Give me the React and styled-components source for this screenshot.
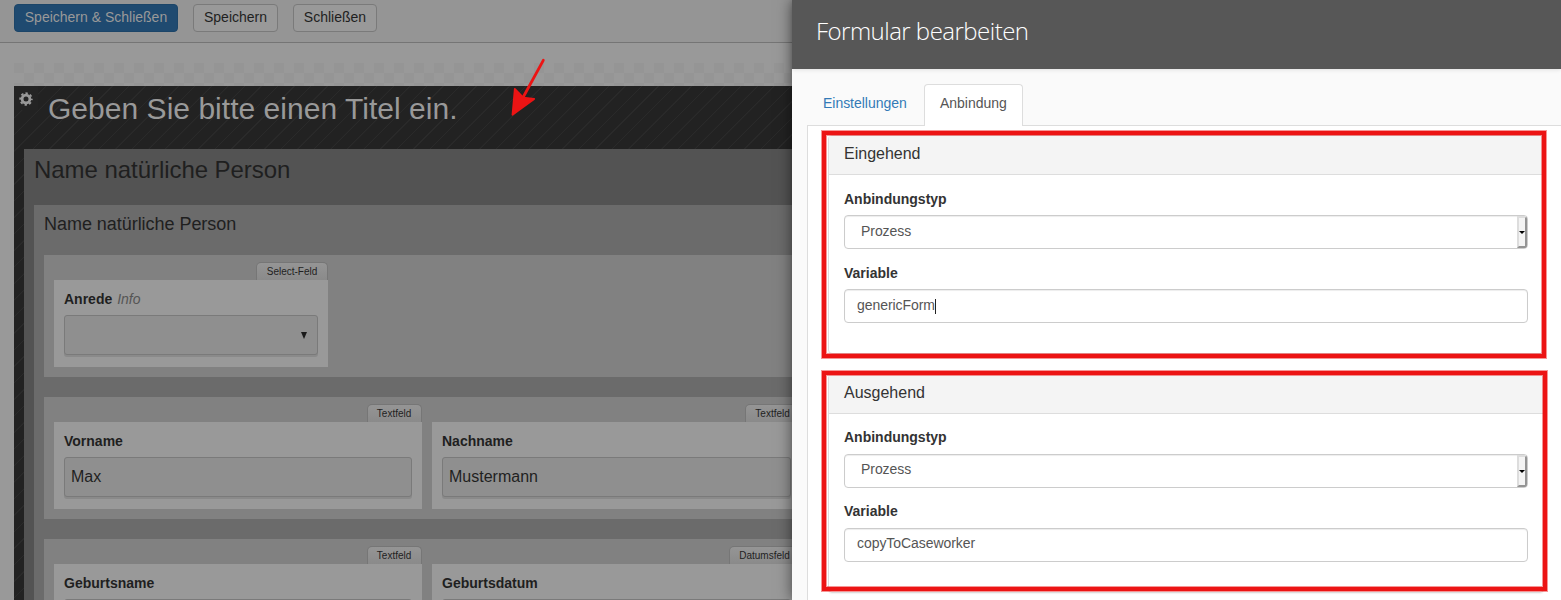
import React from 'react';
import styled, { createGlobalStyle } from 'styled-components';

const Global = createGlobalStyle`
  *, *::before, *::after { box-sizing: border-box; }
  html, body { margin: 0; height: 600px; overflow: hidden; }
  body { background: #999; color: #1f1f1f; font: 14px/20px "Liberation Sans", Arial, sans-serif; }
`;

const Screen = styled.div`
  display: flex;
  width: 1561px;
  height: 600px;
  overflow: hidden;
`;

/* dimmed editor */
const Editor = styled.main`
  flex: none;
  width: 792px;
  overflow: hidden;
`;
const Toolbar = styled.header`
  display: flex;
  align-items: flex-start;
  gap: 15px;
  height: 43px;
  padding: 4px 14px 0;
  background: #959595;
  border-bottom: 1px solid #757575;
`;
const Button = styled.button`
  width: ${p => p.$w}px;
  height: 28px;
  padding: 0 0 2px;
  border: 1px solid ${p => (p.$primary ? '#1c4568' : '#7a7a7a')};
  border-radius: 4px;
  background: ${p => (p.$primary ? '#1f4a70' : '#999')};
  color: ${p => (p.$primary ? '#999' : '#1f1f1f')};
  font: inherit;
  white-space: nowrap;
`;
const Canvas = styled.div`
  width: 1216px;
  margin: 20px 0 0 14px;
  padding-top: 23px;
  background: repeating-conic-gradient(#999 0 25%, #959595 0 50%) 0 0 / 20px 20px;
`;
const Form = styled.section`
  position: relative;
  height: 700px;
  padding: 0 10px;
  background: repeating-linear-gradient(135deg, #222 0 10.5px, #2a2a2a 10.8px 11.5px, #222 11.7px);
`;
const SettingsButton = styled.div`
  position: absolute;
  left: 0;
  top: 0;
  display: grid;
  place-items: center;
  width: 24px;
  height: 24px;
  padding-top: 1px;
  background: #242424;
`;
const FormTitle = styled.h1`
  height: 63px;
  margin: 0;
  padding: 5px 0 0 24px;
  color: #999;
  font-size: 30px;
  font-weight: 400;
  line-height: 36px;
  letter-spacing: .03px;
  white-space: nowrap;
`;
const Page = styled.section`
  height: 640px;
  padding: 0 10px;
  background: #535353;
`;
const PageTitle = styled.h2`
  height: 56px;
  margin: 0;
  padding-top: 7px;
  font-size: 24px;
  font-weight: 400;
  line-height: 28px;
  letter-spacing: -.05px;
`;
const Section = styled.section`
  height: 600px;
  padding: 0 10px;
  background: #6b6b6b;
`;
const SectionTitle = styled.h3`
  height: 50px;
  margin: 0;
  padding-top: 9px;
  font-size: 18px;
  font-weight: 400;
  line-height: 20px;
  letter-spacing: -.04px;
`;
const Row = styled.div`
  display: flex;
  gap: 10px;
  height: 122px;
  margin-bottom: 20px;
  padding: 7px 10px 10px;
  background: #818181;
`;
const Column = styled.div`
  display: flex;
  flex-direction: column;
  align-items: flex-end;
  flex: none;
  width: ${p => p.$w}px;
`;
const TypeTab = styled.span`
  height: 18px;
  padding: 0 9.7px 0 9.3px;
  border: 1px solid #767676;
  border-bottom: 0;
  border-radius: 5px 5px 0 0;
  background: linear-gradient(#959595, #8a8a8a);
  font-size: 10px;
  line-height: 17px;
`;
const Card = styled.div`
  width: 100%;
  height: 87px;
  padding: 9px 10px;
  background: #999;
`;
const FieldLabel = styled.div`
  height: 26px;
  font-weight: 700;
`;
const Hint = styled.em`
  margin-left: 1px;
  color: #555;
  font-weight: 400;
`;
const Field = styled.div`
  display: flex;
  align-items: center;
  height: 40px;
  padding: 0 10px 0 6px;
  border: 1px solid #7a7a7a;
  border-radius: 3px;
  background: #8f8f8f;
  box-shadow: 0 2px 0 #8a8a8a;
  font-size: 16px;
`;
const Triangle = styled.i`
  margin-left: auto;
  border: 3px solid transparent;
  border-top: 7px solid #1a1a1a;
  border-bottom: 0;
`;

/* side dialog */
const Dialog = styled.aside`
  position: relative;
  flex: none;
  width: 769px;
  background: #fafafa;
  color: #333;
  box-shadow: 0 0 14px rgba(0, 0, 0, .55);
`;
const DialogHeader = styled.header`
  height: 69px;
  padding: 14px 24px;
  background: #575757;
  box-shadow: 0 1px 4px rgba(0, 0, 0, .1);
  color: #fff;
  font: 300 24px/33px "Open Sans", sans-serif;
  letter-spacing: -.52px;
`;
const Tabs = styled.nav`
  display: flex;
  height: 57px;
  padding: 15px 0 0 15px;
`;
const Tab = styled.div`
  position: relative;
  z-index: 1;
  width: ${p => p.$w}px;
  height: 42px;
  margin-right: 2px;
  padding: 8px 15px;
  border: 1px solid ${p => (p.$active ? '#ddd' : 'transparent')};
  border-bottom: 0;
  border-radius: 4px 4px 0 0;
  background: ${p => (p.$active ? '#fff' : 'transparent')};
  color: ${p => (p.$active ? '#555' : '#337ab7')};
  letter-spacing: -.03px;
  white-space: nowrap;
`;
const Pane = styled.div`
  height: 520px;
  margin: -1px 0 0 15px;
  padding: 9px 17px 0 20px;
  border: 1px solid #ddd;
  border-right: 0;
  background: #fff;
`;
const Panel = styled.section`
  position: relative;
  height: 219px;
  margin-bottom: 20px;
  border: 1px solid #ddd;
  border-radius: 4px;
  box-shadow: 0 1px 1px rgba(0, 0, 0, .05);
`;
const PanelHeader = styled.h4`
  height: 39px;
  margin: 0;
  padding: 8px 15px;
  border-bottom: 1px solid #ddd;
  background: #f4f4f4;
  font-size: 16px;
  font-weight: 400;
  line-height: 20px;
`;
const PanelBody = styled.div`
  padding: 15px;
`;
const Group = styled.div`
  margin-bottom: 15px;
`;
const Label = styled.div`
  height: 25px;
  font-weight: 700;
  line-height: ${p => (p.$tight ? 16 : 18)}px;
`;
const Input = styled.div`
  display: flex;
  height: 34px;
  padding-left: ${p => (p.$select ? 16 : 12)}px;
  overflow: hidden;
  border: 1px solid #ccc;
  border-radius: 4px;
  box-shadow: inset 0 1px 1px rgba(0, 0, 0, .075);
  color: #555;
  letter-spacing: -.06px;
  line-height: ${p => (p.$tight ? 29 : 31)}px;
`;
const Caret = styled.i`
  width: 1px;
  height: 15px;
  margin-top: 9px;
  background: #222;
`;
const SelectButton = styled.i`
  display: grid;
  place-items: center;
  width: 10px;
  margin-left: auto;
  border: 2px solid;
  border-color: #ddd #949494 #949494 #ddd;
  background: #f4f4f4;
  &::after {
    content: '';
    border: 3px solid transparent;
    border-top-color: #000;
    border-bottom: 0;
  }
`;
const Highlight = styled.div`
  position: absolute;
  inset: ${p => p.$inset};
  border: 4px solid #ec1414;
  box-shadow: 0 0 0 1px rgba(236, 20, 20, .45), inset 0 0 0 1px rgba(236, 20, 20, .45);
`;
const Arrow = styled.svg`
  position: absolute;
  left: 505px;
  top: 54px;
`;

function FormField({ width, type, label, hint, value, select }) {
  return (
    <Column $w={width}>
      <TypeTab>{type}</TypeTab>
      <Card>
        <FieldLabel>{label} {hint && <Hint>{hint}</Hint>}</FieldLabel>
        <Field>{value}{select && <Triangle />}</Field>
      </Card>
    </Column>
  );
}

function BindingPanel({ title, variable, focused, tight, inset }) {
  return (
    <Panel>
      <PanelHeader>{title}</PanelHeader>
      <PanelBody>
        <Group>
          <Label $tight={tight}>Anbindungstyp</Label>
          <Input $select $tight={tight}>Prozess<SelectButton /></Input>
        </Group>
        <Group>
          <Label $tight={tight}>Variable</Label>
          <Input $tight={tight}>{variable}{focused && <Caret />}</Input>
        </Group>
      </PanelBody>
      <Highlight $inset={inset} />
    </Panel>
  );
}

export default function App() {
  return (
    <>
      <Global />
      <Screen>
        <Editor>
          <Toolbar>
            <Button $w={164} $primary>Speichern &amp; Schließen</Button>
            <Button $w={85}>Speichern</Button>
            <Button $w={84}>Schließen</Button>
          </Toolbar>
          <Canvas>
            <Form>
              <SettingsButton>
                <svg width="14" height="14" viewBox="0 0 14 14">
                  <circle cx="7" cy="7" r="3.9" fill="none" stroke="#999" strokeWidth="2.8" />
                  <circle cx="7" cy="7" r="5.8" fill="none" stroke="#999" strokeWidth="1.8" strokeDasharray="2.4 2.155" strokeDashoffset="1.2" />
                </svg>
              </SettingsButton>
              <FormTitle>Geben Sie bitte einen Titel ein.</FormTitle>
              <Page>
                <PageTitle>Name natürliche Person</PageTitle>
                <Section>
                  <SectionTitle>Name natürliche Person</SectionTitle>
                  <Row>
                    <FormField width={274} type="Select-Feld" label="Anrede" hint="Info" select />
                  </Row>
                  <Row>
                    <FormField width={368} type="Textfeld" label="Vorname" value="Max" />
                    <FormField width={368.5} type="Textfeld" label="Nachname" value="Mustermann" />
                  </Row>
                  <Row>
                    <FormField width={368} type="Textfeld" label="Geburtsname" />
                    <FormField width={368.5} type="Datumsfeld" label="Geburtsdatum" />
                  </Row>
                </Section>
              </Page>
            </Form>
          </Canvas>
        </Editor>
        <Dialog>
          <DialogHeader>Formular bearbeiten</DialogHeader>
          <Tabs>
            <Tab $w={115}>Einstellungen</Tab>
            <Tab $w={99} $active>Anbindung</Tab>
          </Tabs>
          <Pane>
            <BindingPanel title="Eingehend" variable="genericForm" focused inset="-5px -3px -5px -7px" />
            <BindingPanel title="Ausgehend" variable="copyToCaseworker" tight inset="-4px -4px 1px -7px" />
          </Pane>
        </Dialog>
      </Screen>
      <Arrow width="44" height="66" viewBox="0 0 44 66">
        <path d="M38.3 6.300 18 43.500" stroke="#ec1414" strokeWidth="2.8" strokeLinecap="round" />
        <path d="M7.500 60.800 9.800 35 18.300 43.700 29.200 45Z" fill="#ec1414" stroke="#ec1414" strokeWidth="1.800" strokeLinejoin="round" />
      </Arrow>
    </>
  );
}
